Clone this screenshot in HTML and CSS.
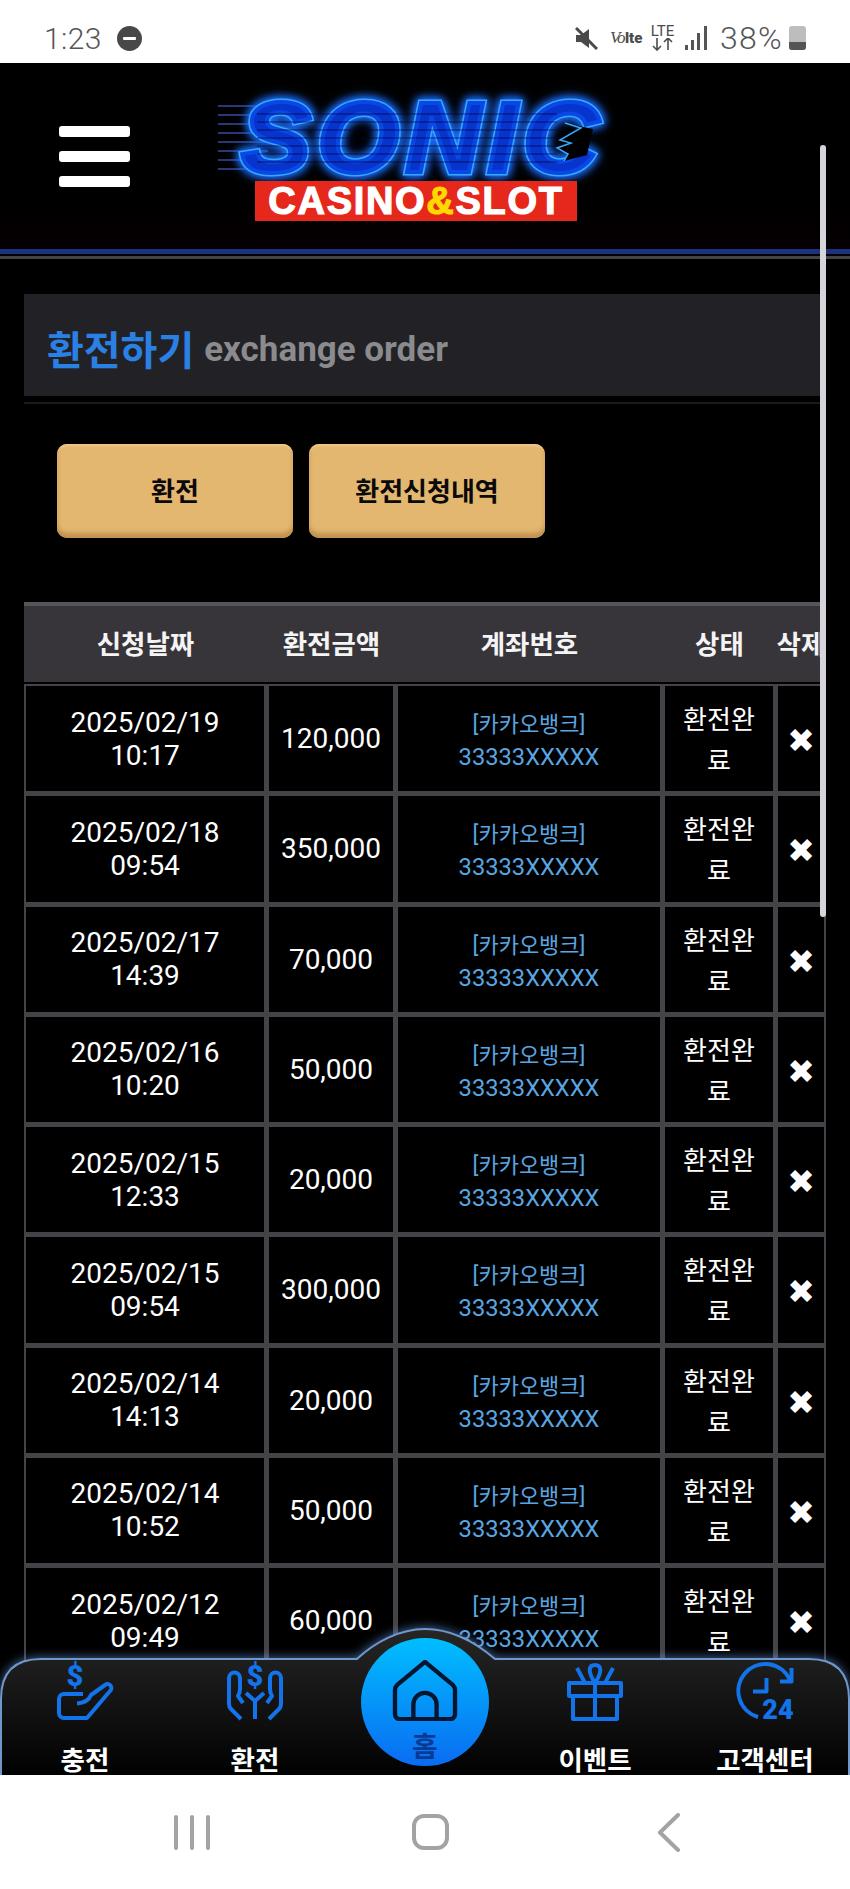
FILE: index.html
```
<!DOCTYPE html>
<html lang="ko">
<head>
<meta charset="utf-8">
<title>환전하기</title>
<link rel="stylesheet" href="styles.css">
</head>
<body>
<div class="phone">
  <div class="status">
    <div class="status-left">
      <span class="clock">1:23</span>
      <span class="dnd"><i></i></span>
    </div>
    <div class="status-right">
      <svg class="mute" viewBox="0 0 23 23"><path class="mute-fill" d="M1 8h5l8-6v19l-8-6H1z"/><path class="mute-cut" d="M1 1l21 21"/></svg>
      <span class="volte"><em>Vo</em><b>lte</b></span>
      <span class="lte"><span>LTE</span><svg viewBox="0 0 25 13"><path d="M7 0v12M3 8l4 4 4-4M18 12V0M14 4l4-4 4 4"/></svg></span>
      <svg class="signal" viewBox="0 0 22 24"><rect x="0" y="19" width="3" height="5"/><rect x="6" y="14" width="3" height="10"/><rect x="12" y="7" width="3" height="17"/><rect x="19" y="0" width="3" height="24"/></svg>
      <span class="pct">38%</span>
      <span class="battery"><i></i></span>
    </div>
  </div>

  <div class="screen">
    <header class="top">
      <div class="burger"><span></span><span></span><span></span></div>
      <div class="logo">
        <div class="sonic" data-t="SONIC"><span>SONIC</span></div>
        <svg class="notch" viewBox="0 0 60 60"><path class="notch-fill" d="M22 12L38 17 17 29 28 32 14 37 25 43 21 50 44 44 50 18Z"/><path class="notch-line" d="M22 12L38 17 17 29 28 32 14 37 25 43 21 50"/></svg>
        <div class="casino">CASINO<em>&amp;</em>SLOT</div>
      </div>
    </header>
    <div class="rule"></div>

    <main class="content">
      <h1 class="title"><span class="ko">환전하기</span> <span class="en">exchange order</span></h1>
      <div class="title-rule"></div>
      <div class="tabs">
        <a class="tab">환전</a>
        <a class="tab">환전신청내역</a>
      </div>
      <table class="list">
        <thead>
          <tr>
            <th class="c1">신청날짜</th>
            <th class="c2">환전금액</th>
            <th class="c3">계좌번호</th>
            <th class="c4">상태</th>
            <th class="c5">삭제</th>
          </tr>
        </thead>
        <tbody>
          <tr><td>2025/02/19<br>10:17</td><td>120,000</td><td class="acct">[카카오뱅크]<br><span class="no">33333XXXXX</span></td><td class="state">환전완료</td><td class="del">✖</td></tr>
          <tr><td>2025/02/18<br>09:54</td><td>350,000</td><td class="acct">[카카오뱅크]<br><span class="no">33333XXXXX</span></td><td class="state">환전완료</td><td class="del">✖</td></tr>
          <tr><td>2025/02/17<br>14:39</td><td>70,000</td><td class="acct">[카카오뱅크]<br><span class="no">33333XXXXX</span></td><td class="state">환전완료</td><td class="del">✖</td></tr>
          <tr><td>2025/02/16<br>10:20</td><td>50,000</td><td class="acct">[카카오뱅크]<br><span class="no">33333XXXXX</span></td><td class="state">환전완료</td><td class="del">✖</td></tr>
          <tr><td>2025/02/15<br>12:33</td><td>20,000</td><td class="acct">[카카오뱅크]<br><span class="no">33333XXXXX</span></td><td class="state">환전완료</td><td class="del">✖</td></tr>
          <tr><td>2025/02/15<br>09:54</td><td>300,000</td><td class="acct">[카카오뱅크]<br><span class="no">33333XXXXX</span></td><td class="state">환전완료</td><td class="del">✖</td></tr>
          <tr><td>2025/02/14<br>14:13</td><td>20,000</td><td class="acct">[카카오뱅크]<br><span class="no">33333XXXXX</span></td><td class="state">환전완료</td><td class="del">✖</td></tr>
          <tr><td>2025/02/14<br>10:52</td><td>50,000</td><td class="acct">[카카오뱅크]<br><span class="no">33333XXXXX</span></td><td class="state">환전완료</td><td class="del">✖</td></tr>
          <tr><td>2025/02/12<br>09:49</td><td>60,000</td><td class="acct">[카카오뱅크]<br><span class="no">33333XXXXX</span></td><td class="state">환전완료</td><td class="del">✖</td></tr>
        </tbody>
      </table>
    </main>

    <div class="scrollbar"></div>

    <nav class="dock">
      <svg class="dock-bg" viewBox="0 0 850 155">
        <defs>
          <linearGradient id="dockfill" x1="0" y1="0" x2="0" y2="1">
            <stop offset="0" stop-color="#262626"/>
            <stop offset="0.35" stop-color="#191919"/>
            <stop offset="1" stop-color="#000000"/>
          </linearGradient>
        </defs>
        <path d="M1 160V79Q1 39 41 39H357C375 22 400 9 425 9S475 22 495 39H809Q849 39 849 79V160Z"/>
      </svg>
      <a class="item">
        <svg class="ico" viewBox="0 0 56 58"><text class="ico-t" x="18" y="23">$</text><path d="M26 31H7a5 5 0 0 0-5 5V50a5 5 0 0 0 5 5H30L53 28a3.500 3.500 0 0 0-5-6L34 32c-2 5-7 8-14 8.500"/></svg>
        <span class="lbl">충전</span>
      </a>
      <a class="item">
        <svg class="ico" viewBox="0 0 56 58"><text class="ico-t" x="28" y="23">$</text><path d="M14 56L4 46Q2 44 2 41V15a5.500 5.500 0 0 1 11 0V26Q13 30 11 33L16 40M42 56L52 46Q54 44 54 41V15a5.500 5.500 0 0 0-11 0V26Q43 30 45 33L40 40M28 56V38L19 30M28 38L37 30"/></svg>
        <span class="lbl">환전</span>
      </a>
      <a class="item">
        <span class="home-btn">
          <svg viewBox="0 0 66 63"><path d="M33 2L62 26Q64 28 64 31V56a5 5 0 0 1-5 5H7a5 5 0 0 1-5-5V31Q2 28 4 26ZM21 61V46a12 12 0 0 1 24 0V61"/></svg>
          <span>홈</span>
        </span>
      </a>
      <a class="item">
        <svg class="ico" viewBox="0 0 56 58"><path d="M2 20H54V33H2ZM6 33V56H50V33M28 20V56M10 5L18 20M46 5L38 20M28 20C20 8 22 2 28 2S36 8 28 20"/></svg>
        <span class="lbl">이벤트</span>
      </a>
      <a class="item">
        <svg class="ico" viewBox="0 0 56 58"><path d="M53 17A27 27 0 1 0 21 54M54.500 5V18.500H43M29.500 15V28.500H16"/><text class="ico-n" x="41" y="56">24</text></svg>
        <span class="lbl">고객센터</span>
      </a>
    </nav>
  </div>

  <div class="sysnav">
    <div class="recents"><i></i><i></i><i></i></div>
    <div class="homekey"></div>
    <svg class="back" viewBox="0 0 23 39"><path d="M21 2L3 19.500 21 37"/></svg>
  </div>
</div>
</body>
</html>
```

FILE: styles.css
```
* { box-sizing: border-box; }
html, body { margin: 0; padding: 0; background: #000; }
body { font-family: Roboto, "Noto Sans CJK KR", sans-serif; color: #fff; }
.phone { width: 850px; height: 1889px; display: flex; flex-direction: column; overflow: hidden; background: #fff; }

/* status bar */
.status { height: 63px; flex: none; background: #fff; color: #555; display: flex; justify-content: space-between; align-items: center; padding: 13px 44px 0; }
.status-left { display: flex; align-items: center; gap: 15px; }
.clock { font-size: 30px; font-weight: 300; letter-spacing: 0.4px; }
.dnd { width: 25px; height: 25px; border-radius: 50%; background: #484848; display: flex; align-items: center; justify-content: center; }
.dnd i { width: 13px; height: 3px; background: #fff; border-radius: 1px; }
.status-right { display: flex; align-items: center; }
.mute { width: 23px; height: 23px; }
.mute-fill { fill: #4a4a4a; }
.mute-cut { stroke: #4a4a4a; stroke-width: 3; fill: none; }
.volte { margin-left: 12px; width: 32px; font-size: 15px; display: flex; align-items: baseline; color: #4c4c4c; white-space: nowrap; }
.volte em { font-family: "Liberation Serif", serif; font-style: italic; font-size: 17px; letter-spacing: -1.5px; }
.volte b { font-weight: 900; margin-left: 1px; }
.lte { margin-left: 8px; width: 25px; display: flex; flex-direction: column; align-items: center; color: #4c4c4c; }
.lte span { font-size: 15px; line-height: 13px; font-weight: 400; }
.lte svg { width: 25px; height: 13px; fill: none; stroke: #4c4c4c; stroke-width: 1.6; }
.signal { margin-left: 10px; width: 22px; height: 24px; }
.signal rect { fill: #555; }
.pct { margin-left: 13px; font-size: 32px; font-weight: 300; letter-spacing: 1.2px; width: 63px; white-space: nowrap; }
.battery { margin-left: 6px; width: 17px; height: 24px; border-radius: 3px; background: #bdbdbd; display: flex; align-items: flex-end; overflow: hidden; }
.battery i { display: block; width: 100%; height: 8px; background: #555; }

/* app screen */
.screen { position: relative; flex: none; height: 1712px; background: #000; overflow: hidden; }
.top { height: 191px; display: flex; align-items: center; background: linear-gradient(#000 75%, #060002); border-bottom: 5px solid #1c327e; }
.burger { margin-left: 59px; width: 71px; display: flex; flex-direction: column; gap: 14px; }
.burger span { height: 11px; background: #fff; border-radius: 3px; }
.logo { margin-left: 113px; margin-top: 8px; width: 360px; position: relative; display: flex; flex-direction: column; align-items: flex-start; }
.logo::before { content: ""; position: absolute; left: -25px; top: 6px; width: 50px; height: 66px; background: repeating-linear-gradient(180deg, #3d4fa8 0 1.5px, transparent 1.5px 9px); opacity: 0.7; }
.logo::after { content: ""; position: absolute; left: 14px; top: 8px; width: 300px; height: 62px; background: repeating-linear-gradient(180deg, transparent 0 6px, rgba(0, 0, 50, 0.35) 6px 8px); }
.sonic { position: relative; height: 76px; width: 360px; font: italic 700 101px/76px "Liberation Sans", sans-serif; text-align: center; filter: drop-shadow(0 0 4px #1b6dff) drop-shadow(0 0 4px #1b6dff); }
.sonic span, .sonic::after { display: block; transform: scaleX(1.04); letter-spacing: 6px; white-space: nowrap; }
.sonic span { color: #35a8ff; -webkit-text-stroke: 7px #35a8ff; }
.sonic::after { content: attr(data-t); position: absolute; inset: 0; color: #0634cc; -webkit-text-stroke: 4px #0a48e6; }
.notch { position: absolute; left: 300px; top: 12px; width: 60px; height: 60px; }
.notch-fill { fill: #000; }
.notch-line { fill: none; stroke: #35a8ff; stroke-width: 1.5; }
.casino { position: relative; z-index: 1; margin-top: 6px; margin-left: 12px; width: 322px; height: 40px; background: #e6281c; font: 700 38px/41px "Liberation Sans", sans-serif; letter-spacing: 1.7px; color: #fff; text-align: center; -webkit-text-stroke: 1.2px #fff; white-space: nowrap; }
.casino em { font-style: normal; color: #ffd800; -webkit-text-stroke-color: #ffd800; }
.rule { height: 3px; margin-top: 2px; background: #444; }

.content { padding: 0 24px; margin-top: 35px; }
.title { margin: 0; height: 102px; background: #222226; padding: 6px 0 0 23px; display: flex; align-items: center; gap: 10px; font-weight: 700; }
.title .ko { font-size: 40px; color: #2b80e4; }
.title .en { font-family: Roboto, sans-serif; font-size: 35px; font-weight: 700; color: #8b8b8f; margin-top: 2px; }
.title-rule { height: 2px; margin-top: 6px; background: #1b1b1f; }
.tabs { margin-top: 40px; padding-left: 33px; display: flex; gap: 16px; }
.tab { width: 236px; height: 94px; padding-bottom: 4px; border-radius: 10px; background: #e3b770; box-shadow: inset 0 -5px 4px #c1924f, inset 0 2px 2px #efc88a; color: #0a0a0a; font-size: 26px; font-weight: 700; display: flex; align-items: center; justify-content: center; }

.list { margin-top: 64px; width: 802px; table-layout: fixed; border-collapse: separate; border-spacing: 0; font-size: 28px; line-height: 33px; text-align: center; }
.list th { height: 82px; padding: 0; background: #38353a; background-clip: padding-box; border-top: 4px solid #57555b; border-bottom: 2px solid #000; font-size: 26.500px; font-weight: 700; color: #f4f4f4; white-space: nowrap; }
.c1 { width: 243px; }
.c2 { width: 129px; }
.c3 { width: 267px; }
.c4 { width: 113px; }
.c5 { width: 50px; }
.list td { height: 110.250px; padding: 0 8px; border-style: solid; border-color: #454347; border-width: 2px 3px 3px 2px; background: #000; vertical-align: middle; font-weight: 400; }
.list td.acct { font-size: 22px; color: #5aa6e0; padding-top: 5px; }
.no { font-size: 23.700px; }
.list td.state { font-size: 26px; line-height: 41px; word-break: break-all; padding: 5px 10px 0; }
.list td.del { font-family: "DejaVu Sans", sans-serif; font-size: 33px; padding: 4px 0 0; border-right-width: 2px; }

.scrollbar { position: absolute; left: 820px; top: 82px; width: 6px; height: 772px; background: #d8d4dc; border-radius: 3px; }

/* bottom dock */
.dock { position: absolute; left: 0; right: 0; bottom: 0; height: 116px; display: flex; }
.dock-bg { position: absolute; left: 0; bottom: 0; width: 850px; height: 155px; overflow: visible; filter: drop-shadow(0 -1px 5px rgba(110, 165, 255, 0.55)); }
.dock-bg path { fill: url(#dockfill); stroke: #6f97c9; stroke-width: 2; }
.item { position: relative; width: 170px; display: flex; flex-direction: column; align-items: center; color: #fff; font-size: 26.500px; font-weight: 700; }
.lbl { position: absolute; top: 84px; white-space: nowrap; line-height: 36px; }
.ico { margin-top: 4px; width: 56px; height: 58px; fill: none; stroke: #1273ea; stroke-width: 4; stroke-linejoin: round; overflow: visible; }
.ico-t { font-family: Roboto, sans-serif; font-size: 29px; font-weight: 900; fill: #1273ea; stroke: none; text-anchor: middle; }
.ico-n { font-family: Roboto, sans-serif; font-size: 27px; font-weight: 900; fill: #1273ea; stroke: none; text-anchor: middle; }
.home-btn { position: absolute; left: 21px; top: -21px; width: 128px; height: 128px; border-radius: 50%; background: linear-gradient(#00beff, #0a6cf2); display: flex; flex-direction: column; align-items: center; }
.home-btn svg { margin-top: 22px; width: 66px; height: 63px; fill: none; stroke: #04162f; stroke-width: 4.500; stroke-linejoin: round; }
.home-btn span { font-size: 28px; line-height: 36px; margin-top: 9px; color: #0a3a94; }

/* system nav */
.sysnav { flex: none; height: 114px; background: #fff; display: grid; grid-template-columns: repeat(3, 238px); padding-left: 73px; align-items: center; justify-items: center; }
.recents { display: flex; gap: 12px; }
.recents i { width: 4px; height: 35px; background: #a3a3a3; border-radius: 2px; }
.homekey { width: 37px; height: 36px; border: 4px solid #a3a3a3; border-radius: 12px; }
.back { width: 23px; height: 39px; fill: none; stroke: #a3a3a3; stroke-width: 4; stroke-linecap: round; stroke-linejoin: round; }
```
